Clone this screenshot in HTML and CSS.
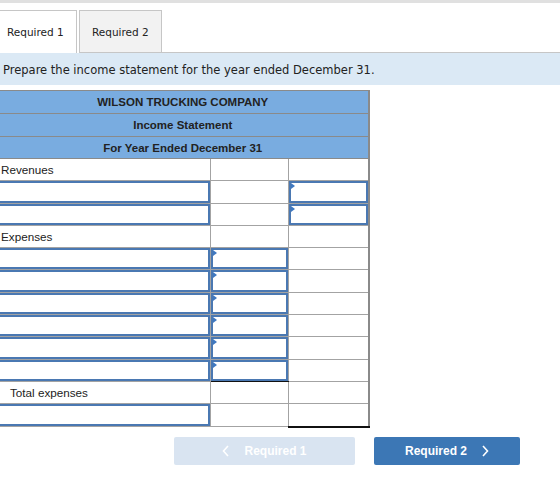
FILE: index.html
```html
<!DOCTYPE html>
<html lang="en">
<head>
    <meta charset="UTF-8">
    <meta name="viewport" content="width=device-width, initial-scale=1.0">
    <title>Income Statement</title>
    <link rel="stylesheet" href="styles.css">
</head>
<body>
    <div class="topbar"></div>
    <div class="tabs">
        <div class="tab active">Required 1</div>
        <div class="tab">Required 2</div>
        <div class="tab-fill"></div>
    </div>
    <div class="instructions">Prepare the income statement for the year ended December 31.</div>

    <table class="statement">
        <colgroup>
            <col class="col-label">
            <col class="col-amount">
            <col class="col-total">
        </colgroup>
        <tr class="head"><th colspan="3">WILSON TRUCKING COMPANY</th></tr>
        <tr class="head"><th colspan="3">Income Statement</th></tr>
        <tr class="head"><th colspan="3" class="short">For Year Ended December 31</th></tr>
        <tr>
            <td>Revenues</td>
            <td></td>
            <td></td>
        </tr>
        <tr>
            <td class="input"></td>
            <td></td>
            <td class="input flag"></td>
        </tr>
        <tr>
            <td class="input"></td>
            <td></td>
            <td class="input flag"></td>
        </tr>
        <tr>
            <td>Expenses</td>
            <td></td>
            <td></td>
        </tr>
        <tr>
            <td class="input"></td>
            <td class="input flag"></td>
            <td></td>
        </tr>
        <tr>
            <td class="input"></td>
            <td class="input flag"></td>
            <td></td>
        </tr>
        <tr>
            <td class="input"></td>
            <td class="input flag"></td>
            <td></td>
        </tr>
        <tr>
            <td class="input"></td>
            <td class="input flag"></td>
            <td></td>
        </tr>
        <tr>
            <td class="input"></td>
            <td class="input flag"></td>
            <td></td>
        </tr>
        <tr>
            <td class="input"></td>
            <td class="input flag underline"></td>
            <td></td>
        </tr>
        <tr>
            <td class="indent">Total expenses</td>
            <td></td>
            <td></td>
        </tr>
        <tr>
            <td class="input"></td>
            <td></td>
            <td class="double-underline"></td>
        </tr>
    </table>

    <div class="nav">
        <button class="nav-button disabled">
            <svg width="8" height="12" viewBox="0 0 8 12"><path d="M6 1 L1.5 6 L6 11" fill="none" stroke="currentColor" stroke-width="1.6"/></svg>
            Required 1
        </button>
        <button class="nav-button">
            Required 2
            <svg width="8" height="12" viewBox="0 0 8 12"><path d="M2 1 L6.5 6 L2 11" fill="none" stroke="currentColor" stroke-width="1.6"/></svg>
        </button>
    </div>
</body>
</html>
```

FILE: styles.css
```css
body {
    margin: 0;
    font-family: "Liberation Sans", Arial, sans-serif;
    color: #222;
    background: #fff;
}
.topbar {
    height: 3px;
    background-color: #e0e0e0;
}
.tabs {
    display: flex;
    margin-top: 7px;
    height: 43px;
}
.tab {
    box-sizing: border-box;
    width: 83px;
    font-family: "DejaVu Sans", Verdana, sans-serif;
    font-size: 10.5px;
    padding-left: 12px;
    line-height: 42px;
    border: 1px solid #c6c6c6;
    background-color: #f2f2f2;
    margin-left: 2px;
}
.tab.active {
    width: 77px;
    background-color: #fff;
    border-bottom: none;
    border-left: none;
    margin-left: 0;
    padding-left: 7px;
}
.tab-fill {
    flex: 1;
    border-bottom: 1px solid #c6c6c6;
}
.instructions {
    font-family: "DejaVu Sans", Verdana, sans-serif;
    font-size: 11.5px;
    background-color: #dbe9f5;
    padding: 0 3px;
    height: 32px;
    line-height: 35px;
}
.statement {
    border-collapse: collapse;
    margin-top: 5px;
    margin-left: -3px;
    width: 371px;
    font-size: 11.7px;
    table-layout: fixed;
}
.col-label {
    width: 213px;
}
.col-amount {
    width: 78px;
}
.col-total {
    width: 80px;
}
.statement th {
    background-color: #79ace0;
    border: 1px solid #8a8a8a;
    border-right-width: 2px;
    height: 22px;
    padding: 0;
    font-size: 11.5px;
    font-weight: bold;
    text-align: center;
}
.statement th.short {
    height: 21px;
}
.statement td {
    border: 1px solid #a3a3a3;
    height: 21.3px;
    padding: 0 0 0 3px;
    position: relative;
}
.statement td:last-child {
    border-right: 2px solid #8a8a8a;
}
.statement td.indent {
    padding-left: 12px;
}
.statement td.input {
    box-shadow: inset 0 0 0 2px #4a78b2;
}
.statement td.flag::before {
    content: "";
    position: absolute;
    top: 2px;
    left: 2px;
    border-top: 3px solid transparent;
    border-bottom: 3px solid transparent;
    border-left: 4px solid #3f78c0;
}
.statement td.underline {
    border-bottom: 1px solid #111;
}
.statement td.double-underline {
    border-bottom: 2px solid #111;
}
.nav {
    display: flex;
    gap: 19px;
    padding: 9px 0 0 174px;
}
.nav-button {
    display: flex;
    align-items: center;
    justify-content: center;
    gap: 14px;
    height: 28px;
    width: 146px;
    border: none;
    border-radius: 2px;
    background-color: #3c77b5;
    color: #fff;
    font-family: "Liberation Sans", Arial, sans-serif;
    font-size: 12px;
    font-weight: bold;
    cursor: pointer;
}
.nav-button.disabled {
    width: 181px;
    background-color: #d9e4f1;
    cursor: default;
}
```
